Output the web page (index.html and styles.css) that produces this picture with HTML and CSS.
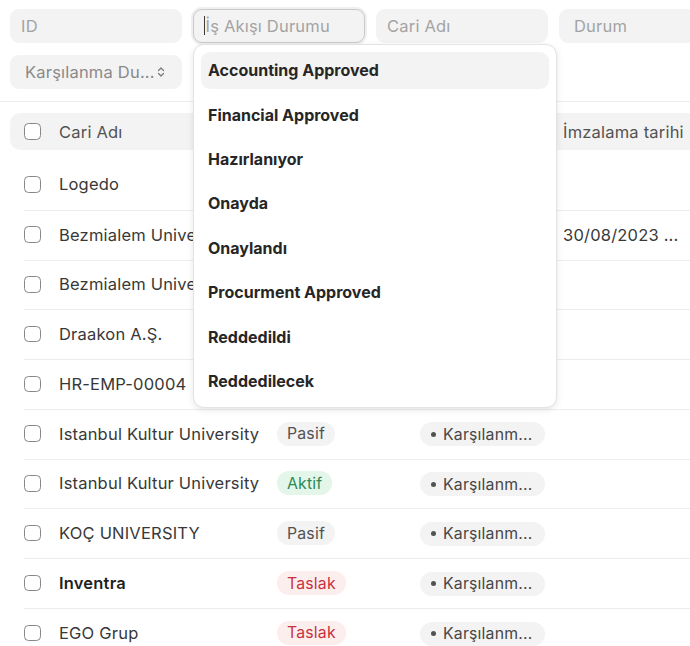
FILE: index.html
```html
<!DOCTYPE html>
<html lang="tr">
<head>
<meta charset="utf-8">
<title>Sözleşmeler</title>
<link rel="stylesheet" href="styles.css">
</head>
<body>
<div class="page">
	<div class="filters">
		<div class="field"><span class="ph">ID</span></div>
		<div class="field focused"><i class="caret"></i><span class="ph">İş Akışı Durumu</span></div>
		<div class="field"><span class="ph">Cari Adı</span></div>
		<div class="field select"><span class="ph">Durum</span></div>
		<div class="field select">
			<span class="ph dark">Karşılanma Du...</span>
			<svg class="updown" width="8" height="12" viewBox="0 0 8 12"><path d="M1.5 4.5 4 2l2.5 2.5M1.5 7.5 4 10l2.5-2.5" fill="none" stroke="#777" stroke-width="1.2" stroke-linecap="round" stroke-linejoin="round"/></svg>
		</div>
	</div>

	<div class="list">
		<div class="head">
			<span class="cb"></span>
			<span>Cari Adı</span>
			<span></span>
			<span></span>
			<span>İmzalama tarihi</span>
		</div>
		<div class="rows">
			<div class="row"><span class="cb"></span><span class="name">Logedo</span><span></span><span></span><span></span></div>
			<div class="row"><span class="cb"></span><span class="name">Bezmialem University</span><span></span><span></span><span class="date">30/08/2023 ...</span></div>
			<div class="row"><span class="cb"></span><span class="name">Bezmialem University</span><span></span><span></span><span></span></div>
			<div class="row"><span class="cb"></span><span class="name">Draakon A.Ş.</span><span></span><span></span><span></span></div>
			<div class="row"><span class="cb"></span><span class="name">HR-EMP-00004</span><span></span><span></span><span></span></div>
			<div class="row"><span class="cb"></span><span class="name">Istanbul Kultur University</span><span><b class="badge gray">Pasif</b></span><span><b class="pill"><i></i>Karşılanm...</b></span><span></span></div>
			<div class="row"><span class="cb"></span><span class="name">Istanbul Kultur University</span><span><b class="badge green">Aktif</b></span><span><b class="pill"><i></i>Karşılanm...</b></span><span></span></div>
			<div class="row"><span class="cb"></span><span class="name">KOÇ UNIVERSITY</span><span><b class="badge gray">Pasif</b></span><span><b class="pill"><i></i>Karşılanm...</b></span><span></span></div>
			<div class="row"><span class="cb"></span><span class="name strong">Inventra</span><span><b class="badge red">Taslak</b></span><span><b class="pill"><i></i>Karşılanm...</b></span><span></span></div>
			<div class="row"><span class="cb"></span><span class="name">EGO Grup</span><span><b class="badge red">Taslak</b></span><span><b class="pill"><i></i>Karşılanm...</b></span><span></span></div>
		</div>
	</div>

	<ul class="dropdown">
		<li class="active">Accounting Approved</li>
		<li>Financial Approved</li>
		<li>Hazırlanıyor</li>
		<li>Onayda</li>
		<li>Onaylandı</li>
		<li>Procurment Approved</li>
		<li>Reddedildi</li>
		<li>Reddedilecek</li>
	</ul>
</div>
</body>
</html>
```

FILE: styles.css
```css
*{box-sizing: border-box;}
html, body{
	margin: 0;
	overflow: hidden;
	background: #fff;
}
body{
	font-family: 'Inter', 'Noto Sans', sans-serif;
	font-size: 16.5px;
	letter-spacing: .012em;
	color: #383838;
}
.page{
	position: relative;
	width: 780px;
}

/* filter bar */
.filters{
	display: grid;
	grid-template-columns: repeat(4, 171.5px);
	column-gap: 11.5px;
	row-gap: 12.5px;
	padding: 9px 10px 12px;
	border-bottom: 1px solid #ececec;
}
.field{
	position: relative;
	display: flex;
	align-items: center;
	height: 33.5px;
	padding: 0 10px;
	background: #f3f3f3;
	border: 1px solid #f3f3f3;
	border-radius: 9px;
}
.field.select{ padding: 0 14px; justify-content: space-between;}
.field.focused{
	border-color: #c9c9c9;
	box-shadow: 0 0 0 2px #efefef;
	padding-left: 9.5px;
}
.field .ph{ color: #a3a3a3;}
.field .ph.dark{ color: #8a8a8a;}
.caret{
	display: block;
	width: 1px;
	height: 19px;
	margin-right: 1px;
	background: #3a3a3a;
}
.updown{ margin-right: 2px;}

/* list */
.head, .row{
	display: grid;
	grid-template-columns: 35px 218px 143px 143px 1fr;
	align-items: center;
}
.head{
	margin: 11.5px 0 0 10px;
	padding-left: 14px;
	height: 37px;
	background: #f3f3f3;
	border-radius: 10px 0 0 10px;
	color: #525252;
}
.rows{
	margin: 10px 0 0 24px;
}
.row{
	height: 49.78px;
	padding-bottom: 1px;
	border-top: 1px solid #ededed;
}
.row:first-child{ border-top: 0;}
.cb{
	display: block;
	width: 16.5px;
	height: 16.5px;
	border: 1.4px solid #878787;
	border-radius: 4.5px;
	background: #fff;
}
.name{ white-space: nowrap; overflow: hidden;}
.name.strong{ font-weight: 600; color: #1f1f1f;}
.date{ color: #383838;}

.badge, .pill{
	display: inline-flex;
	align-items: center;
	height: 24px;
	padding: 0 10px;
	border-radius: 12px;
	font-weight: 400;
	font-size: 15.8px;
}
.badge.gray{ background: #f3f3f3; color: #525252;}
.badge.green{ background: #e4f6ea; color: #2a8a58;}
.badge.red{ background: #fdeeee; color: #c8313e;}
.pill{
	width: 125px;
	background: #f3f3f3;
	color: #474747;
	padding-left: 11px;
}
.pill i{
	width: 5px;
	height: 5px;
	margin-right: 7px;
	border-radius: 50%;
	background: #525252;
}

/* options popup of the focused filter */
.dropdown{
	position: absolute;
	left: 193px;
	top: 44px;
	width: 364px;
	margin: 0;
	padding: 6.5px 7px 7px;
	list-style: none;
	background: #fff;
	border: 1px solid #e3e3e3;
	border-radius: 11px;
	box-shadow: 0 2px 6px rgba(0,0,0,.1);
	letter-spacing: 0;
}
.dropdown li{
	display: flex;
	align-items: center;
	height: 37.6px;
	margin-bottom: 6.8px;
	padding: 0 7px;
	border-radius: 9px;
	font-weight: 700;
	font-size: 16px;
	color: #262626;
}
.dropdown li:last-child{ margin-bottom: 0;}
.dropdown li.active{ background: #f3f3f3;}
```
